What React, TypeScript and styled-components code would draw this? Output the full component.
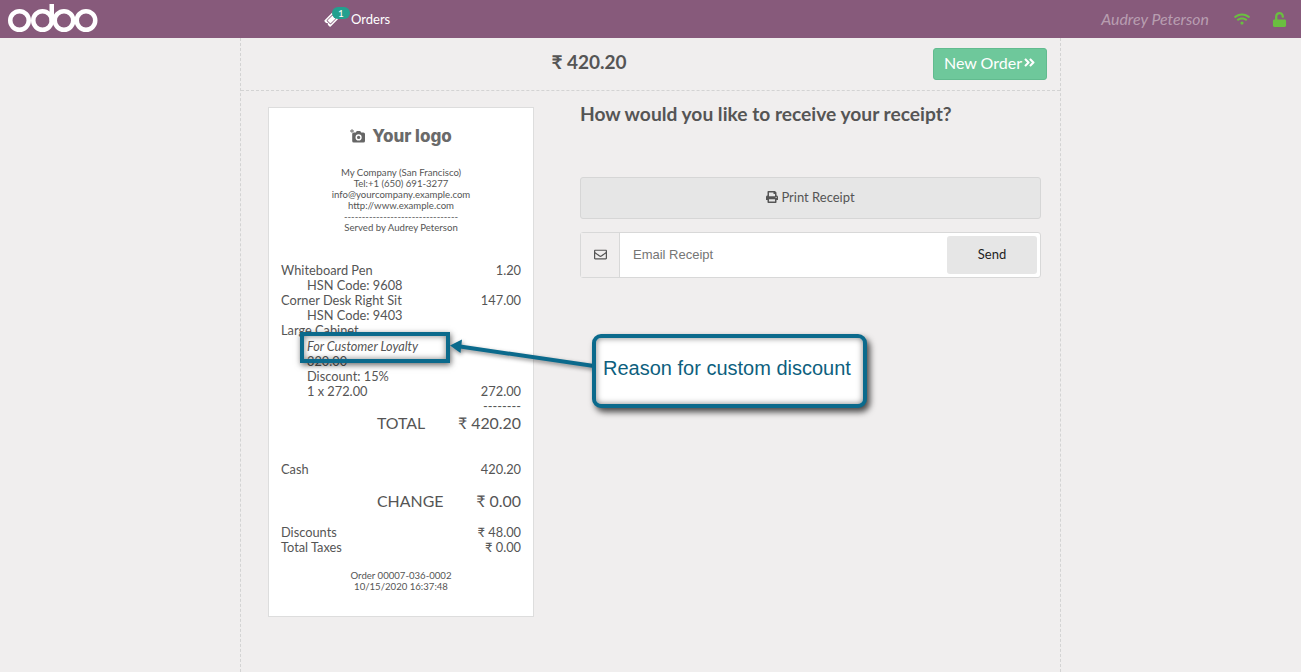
import React from "react";
import styled, { createGlobalStyle } from "styled-components";
import {
  FaAngleDoubleRight,
  FaPrint,
  FaRegEnvelope,
  FaTicketAlt,
  FaUnlock,
  FaWifi,
} from "react-icons/fa";

const GlobalStyle = createGlobalStyle`
  html, body {
    margin: 0;
    height: 100%;
    overflow: hidden;
    background: #f0eeee;
    font-family: Lato, "Noto Sans", sans-serif;
    color: #555;
  }
`;

const Page = styled.div`
  position: relative;
  width: 1301px;
  height: 672px;
  overflow: hidden;
`;

const Navbar = styled.header`
  height: 38px;
  background: #875a7b;
  display: flex;
  align-items: center;
  padding: 0 14px 0 8px;
`;

const OrdersTab = styled.div`
  display: flex;
  align-items: center;
  margin-left: 227px;
  color: #fff;
  font-size: 13px;
  line-height: 18px;
  gap: 13px;
  padding-bottom: 1px;
`;

const TicketWrap = styled.span`
  position: relative;
  display: inline-flex;
  color: #fff;
  font-size: 13px;
  transform: translateY(1px);

  svg {
    transform: rotate(-45deg);
  }
`;

const Badge = styled.span`
  position: absolute;
  top: -6px;
  left: 7px;
  width: 18px;
  height: 12px;
  border-radius: 8px;
  background: #23a08f;
  color: #fff;
  font-size: 10px;
  line-height: 12px;
  text-align: center;
`;

const NavRight = styled.div`
  margin-left: auto;
  display: flex;
  align-items: center;
`;

const UserName = styled.span`
  font-size: 15.9px;
  font-style: italic;
  color: rgba(255, 255, 255, 0.42);
  margin-right: 25px;
  padding-bottom: 2px;
`;

const StatusIcon = styled.span`
  display: inline-flex;
  color: #6abf40;
  font-size: 15px;
  margin-left: ${(props: { $gap: number }) => props.$gap}px;
`;

const Column = styled.main`
  width: 819px;
  height: 634px;
  margin-left: 240px;
  border-left: 1px dashed #d3d3d3;
  border-right: 1px dashed #d3d3d3;
`;

const TopBar = styled.div`
  height: 53px;
  border-bottom: 1px dashed #d3d3d3;
  display: flex;
  align-items: flex-start;
  padding: 10px 13px 0 0;
  box-sizing: border-box;
`;

const Amount = styled.div`
  flex: 1;
  text-align: center;
  font-size: 19px;
  font-weight: 700;
  line-height: 26px;
  padding: 1px 0 0 4px;
`;

const NewOrder = styled.button`
  width: 114px;
  height: 32px;
  padding: 0 0 3px;
  border: 1px solid #62bb8f;
  border-radius: 3px;
  background: #6ec89b;
  color: #fff;
  font-family: inherit;
  font-size: 16px;
  display: flex;
  align-items: center;
  justify-content: center;
  gap: 1px;
`;

const Content = styled.div`
  display: flex;
  align-items: flex-start;
  padding: 16px 19px 0 27px;
`;

const Receipt = styled.section`
  width: 266px;
  height: 510px;
  box-sizing: border-box;
  background: #fff;
  border: 1px solid #ddd;
  padding: 18px 12px 0;
  font-size: 12.8px;
  line-height: 15px;
  color: #555;
  flex-shrink: 0;
`;

const LogoLine = styled.div`
  display: flex;
  justify-content: center;
  align-items: center;
  gap: 6px;
  height: 20px;
  font-family: Inter, "DejaVu Sans", sans-serif;
  font-size: 17px;
  font-weight: 800;
  color: #6a6a6a;
`;

const CompanyInfo = styled.div`
  margin-top: 21px;
  text-align: center;
  font-size: 9.6px;
  line-height: 11px;
`;

const OrderLines = styled.div`
  margin-top: 30px;
`;

const Row = styled.div`
  display: flex;
  justify-content: space-between;
`;

const Indented = styled.div`
  padding-left: 26px;
`;

const Reason = styled(Indented)`
  font-style: italic;
  font-size: 12.7px;
  line-height: 16px;
  height: 16px;
`;

const Dashes = styled.div`
  text-align: right;
  line-height: 15px;
`;

const BigRow = styled.div`
  display: flex;
  justify-content: space-between;
  padding-left: 96px;
  font-size: 15.9px;
  line-height: 20px;
  margin-top: ${(props: { $top: number }) => props.$top}px;
`;

const Block = styled.div`
  margin-top: ${(props: { $top: number }) => props.$top}px;
`;

const OrderRef = styled.div`
  margin-top: 15px;
  text-align: center;
  font-size: 9.6px;
  line-height: 11px;
`;

const Actions = styled.section`
  flex: 1;
  margin-left: 46px;
`;

const Heading = styled.h2`
  margin: 0;
  font-size: 19.2px;
  font-weight: 700;
  line-height: 14px;
  height: 70px;
  color: #555;
`;

const PrintButton = styled.button`
  width: 100%;
  height: 42px;
  border: 1px solid #d6d6d6;
  border-radius: 3px;
  background: #e6e6e6;
  color: #555;
  font-family: inherit;
  font-size: 13px;
  display: flex;
  align-items: center;
  justify-content: center;
  gap: 3px;
  padding: 0 0 3px;
`;

const EmailGroup = styled.div`
  margin-top: 13px;
  height: 46px;
  box-sizing: border-box;
  display: flex;
  border: 1px solid #d8d8d8;
  border-radius: 3px;
  background: #fff;
`;

const EmailAddon = styled.span`
  width: 38px;
  display: flex;
  align-items: center;
  justify-content: center;
  background: #f0eeee;
  border-right: 1px solid #d8d8d8;
  font-size: 13px;
  color: #555;
  padding-bottom: 1px;
`;

const EmailInput = styled.div`
  flex: 1;
  display: flex;
  align-items: center;
  padding: 0 0 2px 13px;
  font-family: "Liberation Sans", Arial, sans-serif;
  font-size: 13px;
  color: #757575;
`;

const SendButton = styled.button`
  width: 90px;
  height: 38px;
  align-self: center;
  margin-right: 3px;
  border: none;
  border-radius: 3px;
  background: #e6e6e6;
  color: #222;
  font-family: inherit;
  font-size: 13px;
  padding: 0 0 3px;
`;

const Highlight = styled.div`
  position: absolute;
  left: 300px;
  top: 332px;
  width: 150px;
  height: 31px;
  box-sizing: border-box;
  border: 4px solid #0b6a8c;
  box-shadow: 1px 2px 6px rgba(0, 0, 0, 0.6), inset 0 0 6px rgba(0, 0, 0, 0.5);
`;

const Arrow = styled.svg`
  position: absolute;
  left: 448px;
  top: 336px;
  overflow: visible;
  filter: drop-shadow(1px 2px 2px rgba(0, 0, 0, 0.45));
`;

const Callout = styled.div`
  position: absolute;
  left: 592px;
  top: 334px;
  width: 275px;
  height: 74px;
  box-sizing: border-box;
  border: 4px solid #0b6a8c;
  border-radius: 9px;
  background: #fff;
  box-shadow: 3px 4px 6px rgba(0, 0, 0, 0.7), inset 0 0 6px rgba(0, 0, 0, 0.5);
  padding: 18px 0 0 7px;
  font-family: "Liberation Sans", Arial, sans-serif;
  font-size: 20px;
  line-height: 24px;
  color: #0d5f7e;
  white-space: nowrap;
`;

export default function App() {
  return (
    <Page>
      <GlobalStyle />
      <Navbar>
        <svg width="90" height="30" viewBox="0 0 90 30" fill="none" stroke="#fff" strokeWidth="4.5">
          <circle cx="11.5" cy="16.5" r="9.25" />
          <circle cx="34.5" cy="16.5" r="9.25" />
          <path d="M43.75 16.5V0" strokeLinecap="round" />
          <circle cx="56" cy="16.5" r="9.25" />
          <circle cx="78" cy="16.5" r="9.25" />
        </svg>
        <OrdersTab>
          <TicketWrap>
            <FaTicketAlt />
            <Badge>1</Badge>
          </TicketWrap>
          Orders
        </OrdersTab>
        <NavRight>
          <UserName>Audrey Peterson</UserName>
          <StatusIcon $gap={0}>
            <FaWifi size={16} />
          </StatusIcon>
          <StatusIcon $gap={22}>
            <FaUnlock size={15} />
          </StatusIcon>
        </NavRight>
      </Navbar>

      <Column>
        <TopBar>
          <Amount>₹ 420.20</Amount>
          <NewOrder>
            New Order <FaAngleDoubleRight size={13} />
          </NewOrder>
        </TopBar>
        <Content>
          <Receipt>
            <LogoLine>
              <svg width="16" height="16" viewBox="0 0 16 16" fill="#666">
                <path d="M1.6 1h.8v1.6H4v.8H2.4V5h-.8V3.4H0v-.8h1.6z" />
                <path
                  fillRule="evenodd"
                  d="M3.8 4.5h2l1-1.5h3.4l1 1.5h2.2A1.6 1.6 0 0 1 15 6.1v6.8a1.6 1.6 0 0 1-1.6 1.6H3.8a1.6 1.6 0 0 1-1.6-1.6V6.1a1.6 1.6 0 0 1 1.6-1.6zM8.6 6.3a3.1 3.1 0 1 0 0 6.2 3.1 3.1 0 0 0 0-6.2z"
                />
                <circle cx="8.6" cy="9.4" r="1.6" />
              </svg>
              Your logo
            </LogoLine>
            <CompanyInfo>
              <div>My Company (San Francisco)</div>
              <div>Tel:+1 (650) 691-3277</div>
              <div>info@yourcompany.example.com</div>
              <div>http://www.example.com</div>
              <div>--------------------------------</div>
              <div>Served by Audrey Peterson</div>
            </CompanyInfo>
            <OrderLines>
              <Row>
                <span>Whiteboard Pen</span>
                <span>1.20</span>
              </Row>
              <Indented>HSN Code: 9608</Indented>
              <Row>
                <span>Corner Desk Right Sit</span>
                <span>147.00</span>
              </Row>
              <Indented>HSN Code: 9403</Indented>
              <div>Large Cabinet</div>
              <Reason>For Customer Loyalty</Reason>
              <Indented>320.00</Indented>
              <Indented>Discount: 15%</Indented>
              <Row>
                <Indented>1 x 272.00</Indented>
                <span>272.00</span>
              </Row>
              <Dashes>--------</Dashes>
            </OrderLines>
            <BigRow $top={-1}>
              <span>TOTAL</span>
              <span>₹ 420.20</span>
            </BigRow>
            <Block $top={29}>
              <Row>
                <span>Cash</span>
                <span>420.20</span>
              </Row>
            </Block>
            <BigRow $top={14}>
              <span>CHANGE</span>
              <span>₹ 0.00</span>
            </BigRow>
            <Block $top={14}>
              <Row>
                <span>Discounts</span>
                <span>₹ 48.00</span>
              </Row>
              <Row>
                <span>Total Taxes</span>
                <span>₹ 0.00</span>
              </Row>
            </Block>
            <OrderRef>
              <div>Order 00007-036-0002</div>
              <div>10/15/2020 16:37:48</div>
            </OrderRef>
          </Receipt>
          <Actions>
            <Heading>How would you like to receive your receipt?</Heading>
            <PrintButton>
              <FaPrint size={12} /> Print Receipt
            </PrintButton>
            <EmailGroup>
              <EmailAddon>
                <FaRegEnvelope />
              </EmailAddon>
              <EmailInput>Email Receipt</EmailInput>
              <SendButton>Send</SendButton>
            </EmailGroup>
          </Actions>
        </Content>
      </Column>

      <Highlight />
      <Arrow width="150" height="36" viewBox="0 0 150 36">
        <path d="M146 30L12 10.5" stroke="#0b6a8c" strokeWidth="4" fill="none" />
        <path d="M2 9.5L14 3.5L12.5 17Z" fill="#0b6a8c" />
      </Arrow>
      <Callout>Reason for custom discount</Callout>
    </Page>
  );
}
